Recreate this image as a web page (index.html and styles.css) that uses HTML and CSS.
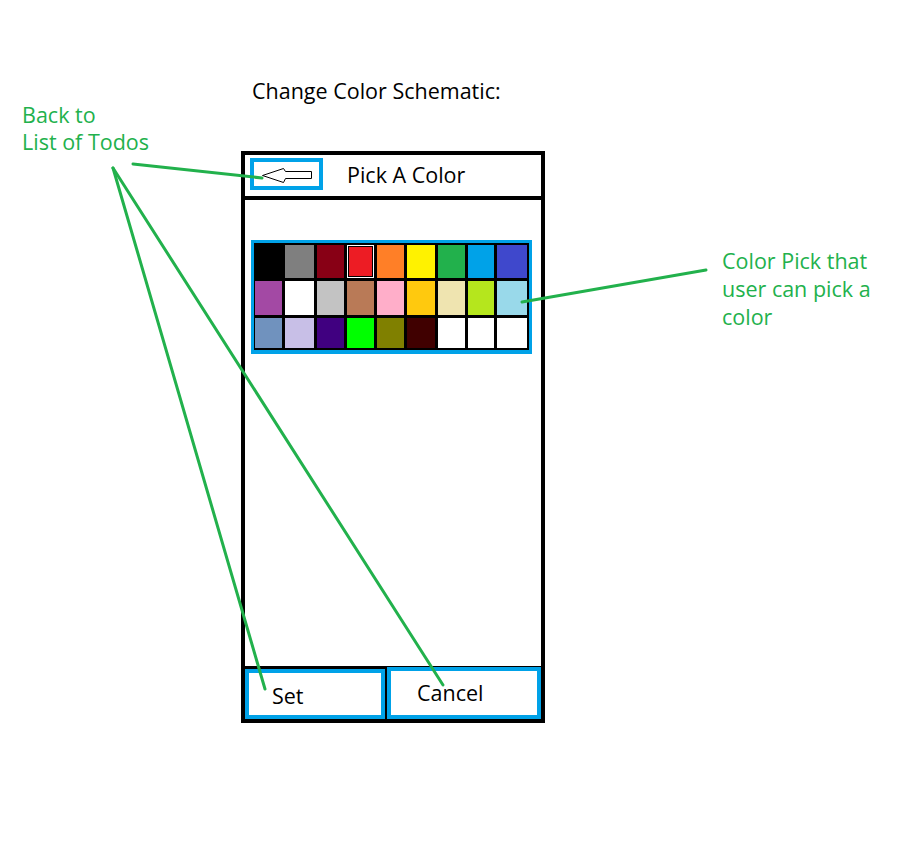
FILE: index.html
```html
<!DOCTYPE html>
<html>
<head>
<meta charset="utf-8">
<link rel="stylesheet" href="styles.css">
</head>
<body>
<div class="canvas">
  <div class="column">
    <div class="page-title">Change Color Schematic:</div>
    <div class="phone">
      <div class="phone-header">
        <div class="back-btn">
          <svg class="back-arrow" width="51" height="17" viewBox="0 0 51 17">
            <polygon points="0.5,8.5 21.5,1.5 23.5,4.5 49.5,4.5 49.5,11.5 23.5,11.5 21.5,15.5" fill="#fff" stroke="#000" stroke-width="1"/>
          </svg>
        </div>
        <div class="header-title">Pick A Color</div>
      </div>
      <div class="phone-body">
        <div class="palette">
          <div class="cell" style="background:#000000"></div>
          <div class="cell" style="background:#7f7f7f"></div>
          <div class="cell" style="background:#880015"></div>
          <div class="cell selected" style="background:#ed1c24"></div>
          <div class="cell" style="background:#ff7f27"></div>
          <div class="cell" style="background:#fff200"></div>
          <div class="cell" style="background:#22b14c"></div>
          <div class="cell" style="background:#00a2e8"></div>
          <div class="cell" style="background:#3f48cc"></div>
          <div class="cell" style="background:#a349a4"></div>
          <div class="cell" style="background:#ffffff"></div>
          <div class="cell" style="background:#c3c3c3"></div>
          <div class="cell" style="background:#b97a57"></div>
          <div class="cell" style="background:#ffaec9"></div>
          <div class="cell" style="background:#ffc90e"></div>
          <div class="cell" style="background:#efe4b0"></div>
          <div class="cell" style="background:#b5e61d"></div>
          <div class="cell" style="background:#99d9ea"></div>
          <div class="cell" style="background:#7092be"></div>
          <div class="cell" style="background:#c8bfe7"></div>
          <div class="cell" style="background:#400080"></div>
          <div class="cell" style="background:#00ff00"></div>
          <div class="cell" style="background:#808000"></div>
          <div class="cell" style="background:#400000"></div>
          <div class="cell" style="background:#ffffff"></div>
          <div class="cell" style="background:#ffffff"></div>
          <div class="cell" style="background:#ffffff"></div>
        </div>
      </div>
      <div class="phone-footer">
        <div class="btn btn-set">Set</div>
        <div class="btn btn-cancel">Cancel</div>
      </div>
    </div>
  </div>

  <div class="note note-back">Back to<br>List of Todos</div>
  <div class="note note-pick">Color Pick that<br>user can pick a<br>color</div>

  <svg class="callouts" width="906" height="856" viewBox="0 0 906 856">
    <g stroke="#22b14c" stroke-width="3" stroke-linecap="round" fill="none">
      <line x1="133" y1="164" x2="262" y2="178"/>
      <line x1="113" y1="168" x2="265" y2="689"/>
      <line x1="113" y1="168" x2="443" y2="685"/>
      <line x1="522" y1="302" x2="706" y2="270"/>
    </g>
  </svg>
</div>
</body>
</html>
```

FILE: styles.css
```css
html, body {
  margin: 0;
  padding: 0;
  background: #ffffff;
}

.canvas {
  position: relative;
  width: 906px;
  height: 856px;
  overflow: hidden;
  font-family: "Open Sans", "Noto Sans", sans-serif;
  font-size: 21.5px;
  line-height: 28px;
  color: #000;
}

.column {
  display: flex;
  flex-direction: column;
  align-items: flex-start;
  padding: 77px 0 0 241px;
}

.page-title {
  margin-left: 11px;
  line-height: 28px;
}

.phone {
  margin-top: 46px;
  box-sizing: border-box;
  width: 304px;
  height: 572px;
  border: 4px solid #000;
  display: flex;
  flex-direction: column;
  background: #fff;
}

.phone-header {
  box-sizing: border-box;
  height: 45px;
  border-bottom: 4px solid #000;
  display: flex;
  align-items: flex-start;
  padding: 3px 0 0 5px;
}

.back-btn {
  box-sizing: border-box;
  width: 73px;
  height: 32px;
  border: 4px solid #00a2e8;
  display: flex;
  align-items: flex-start;
  padding: 5px 0 0 8px;
}

.back-arrow {
  display: block;
}

.header-title {
  margin-left: 24px;
  margin-top: 3px;
  line-height: 28px;
}

.phone-body {
  flex: 1;
  padding: 40px 0 0 6px;
}

.palette {
  box-sizing: border-box;
  width: 281px;
  height: 114px;
  border: 3px solid #00a2e8;
  border-bottom-width: 4px;
  background: #000;
  display: grid;
  grid-template-columns: 27px 29px 27px 27px 27px 28px 27px 26px 30px;
  grid-template-rows: 33px 34px 30px;
  column-gap: 3px;
  row-gap: 3px;
  padding: 2px 0 0 1px;
}

.cell {
  box-sizing: border-box;
}

.cell.selected {
  border: 1px solid #ffffff;
  box-shadow: inset 0 0 0 1px #000;
}

.phone-footer {
  display: flex;
  gap: 2px;
  background: #000;
  border-top: 3px solid #000;
  height: 50px;
}

.btn {
  box-sizing: border-box;
  height: 50px;
  border: 4px solid #00a2e8;
  background: #fff;
  line-height: 28px;
  display: flex;
  align-items: center;
}

.btn-set {
  width: 140px;
  padding-left: 23px;
  padding-top: 4px;
}

.btn-cancel {
  width: 154px;
  margin-top: -2px;
  height: 52px;
  padding-left: 26px;
}

.note {
  position: absolute;
  color: #22b14c;
}

.note-back {
  left: 22px;
  top: 101px;
  line-height: 27px;
}

.note-pick {
  left: 722px;
  top: 247px;
  line-height: 28px;
}

.callouts {
  position: absolute;
  left: 0;
  top: 0;
  pointer-events: none;
}
```
